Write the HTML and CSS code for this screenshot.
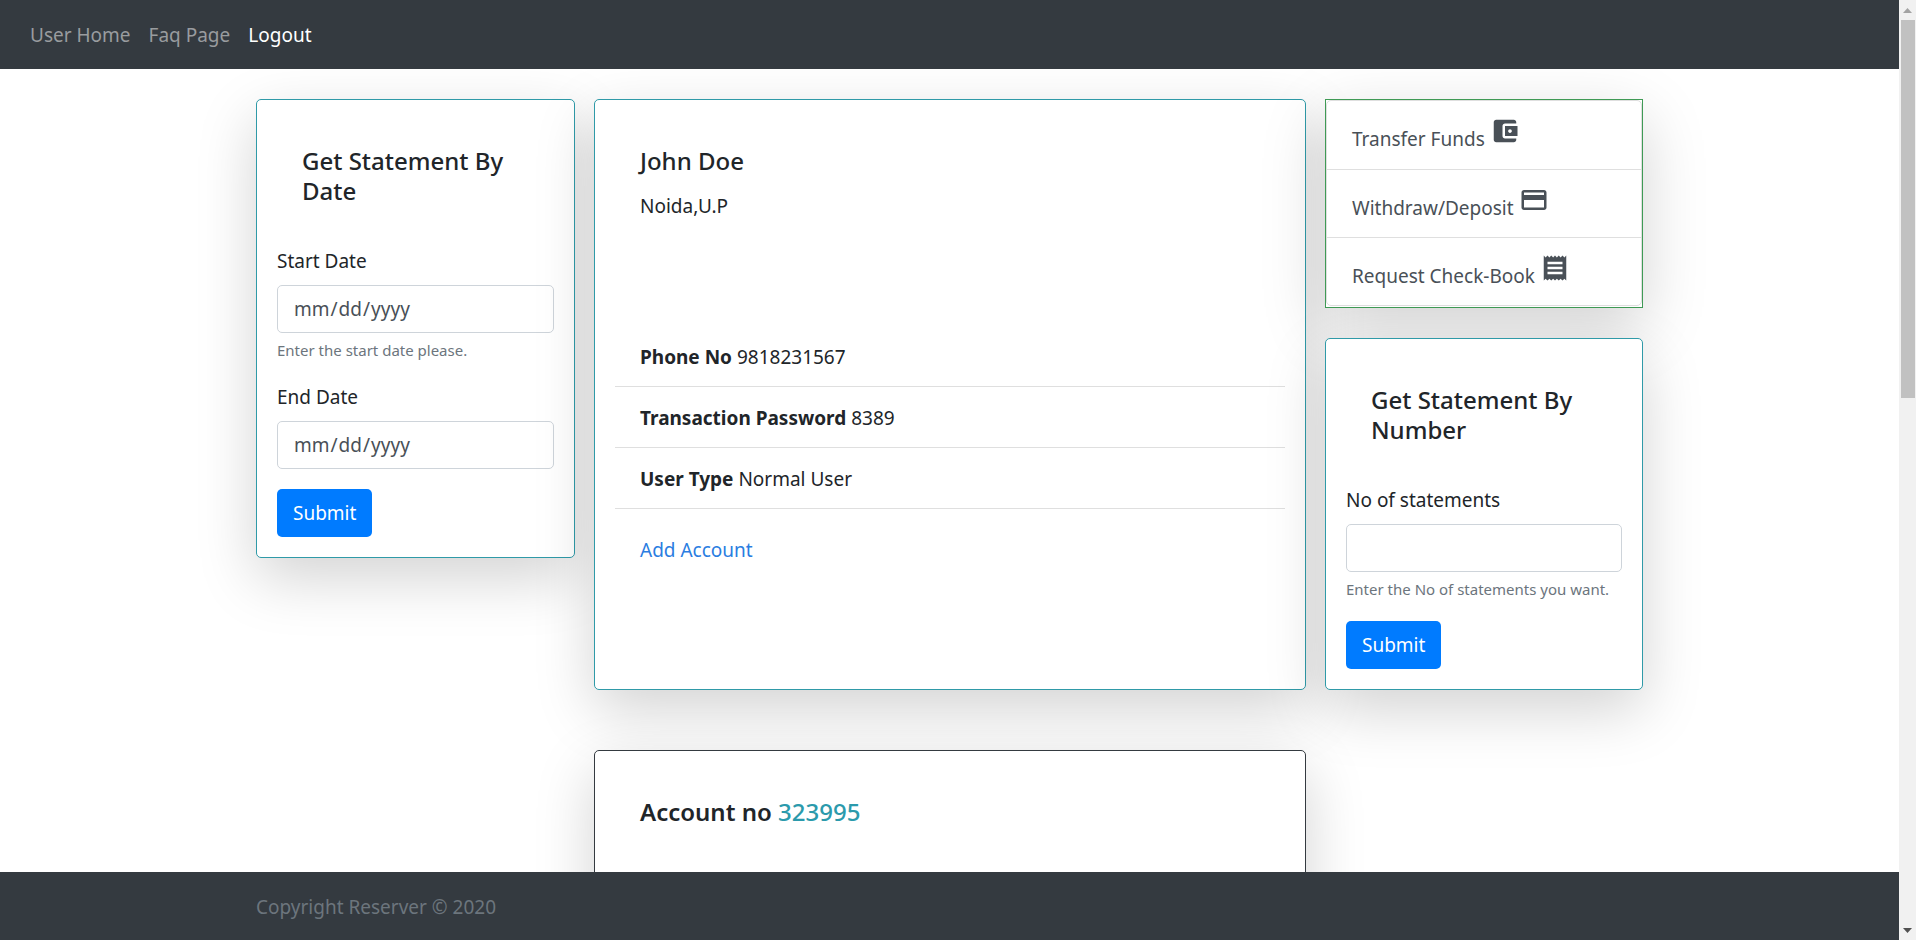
FILE: index.html
```html
<!DOCTYPE html>
<html lang="en">
<head>
<meta charset="utf-8">
<title>User Home</title>
<link rel="stylesheet" href="styles.css">
</head>
<body>
<div class="page">
  <nav class="navbar">
    <a class="nav-link" href="#">User Home</a>
    <a class="nav-link" href="#">Faq Page</a>
    <a class="nav-link active" href="#">Logout</a>
  </nav>

  <main class="content">
    <div class="container dashboard">
      <form class="card statement">
        <h2 class="card-title">Get Statement By Date</h2>
        <div class="form-group">
          <label for="start">Start Date</label>
          <input class="form-control" type="date" id="start">
          <small class="form-text">Enter the start date please.</small>
        </div>
        <div class="form-group">
          <label for="end">End Date</label>
          <input class="form-control" type="date" id="end">
        </div>
        <button class="btn" type="submit">Submit</button>
      </form>

      <section class="card profile">
        <div class="card-body">
          <h2 class="card-heading">John Doe</h2>
          <p class="card-text">Noida,U.P</p>
        </div>
        <ul class="details">
          <li><b>Phone No</b> 9818231567</li>
          <li><b>Transaction Password</b> 8389</li>
          <li><b>User Type</b> Normal User</li>
        </ul>
        <div class="card-body">
          <a class="card-link" href="#">Add Account</a>
        </div>
      </section>

      <div class="side">
        <div class="actions">
          <div class="action-list">
            <a class="action" href="#">Transfer Funds
              <svg class="icon" viewBox="0 0 24 24" aria-hidden="true"><path d="M21 18v1c0 1.100-.9 2-2 2H5c-1.110 0-2-.9-2-2V5c0-1.100.89-2 2-2h14c1.100 0 2 .9 2 2v1h-9c-1.110 0-2 .9-2 2v8c0 1.100.89 2 2 2h9zm-9-2h10V8H12v8zm4-2.500c-.83 0-1.500-.67-1.500-1.500s.67-1.500 1.500-1.500 1.500.67 1.500 1.500-.67 1.500-1.500 1.500z"/></svg></a>
            <a class="action" href="#">Withdraw/Deposit
              <svg class="icon" viewBox="0 0 24 24" aria-hidden="true"><path d="M20 4H4c-1.110 0-1.990.89-1.990 2L2 18c0 1.110.89 2 2 2h16c1.110 0 2-.89 2-2V6c0-1.110-.89-2-2-2zm0 14H4v-6h16v6zm0-10H4V6h16v2z"/></svg></a>
            <a class="action" href="#">Request Check-Book
              <svg class="icon" viewBox="0 0 24 24" aria-hidden="true"><path d="M18 17H6v-2h12v2zm0-4H6v-2h12v2zm0-4H6V7h12v2zM3 22l1.500-1.500L6 22l1.500-1.500L9 22l1.500-1.500L12 22l1.500-1.500L15 22l1.500-1.500L18 22l1.500-1.500L21 22V2l-1.500 1.500L18 2l-1.500 1.500L15 2l-1.500 1.500L12 2l-1.500 1.500L9 2 7.500 3.500 6 2 4.500 3.500 3 2v20z"/></svg></a>
          </div>
        </div>
        <form class="card statement">
          <h2 class="card-title">Get Statement By Number</h2>
          <div class="form-group">
            <label for="count">No of statements</label>
            <input class="form-control" type="text" id="count">
            <small class="form-text">Enter the No of statements you want.</small>
          </div>
          <button class="btn" type="submit">Submit</button>
        </form>
      </div>

      <section class="card account">
        <div class="card-body">
          <h2 class="card-heading account-no">Account no <span class="number">323995</span></h2>
        </div>
      </section>
    </div>
  </main>

  <footer class="footer">
    <div class="container">Copyright Reserver © 2020</div>
  </footer>
</div>

<div class="scrollbar" aria-hidden="true">
  <svg class="arrow" viewBox="0 0 17 20"><path fill="#a3a3a3" d="M4 13h9L8.500 8z"/></svg>
  <div class="track"><div class="thumb"></div></div>
  <svg class="arrow" viewBox="0 0 17 20"><path fill="#505050" d="M4 8h9l-4.500 5z"/></svg>
</div>
</body>
</html>
```

FILE: styles.css
```css
*, *::before, *::after {
  box-sizing: border-box;
}

body {
  margin: 0;
  height: 100vh;
  display: flex;
  font-family: "Noto Sans", "Open Sans", sans-serif;
  font-size: 19px;
  line-height: 30px;
  color: #212529;
  background: #fff;
}

.page {
  flex: 1;
  min-width: 0;
  display: flex;
  flex-direction: column;
}

.navbar {
  display: flex;
  padding: 20px 21px 19px;
  background: #343a40;
}

.nav-link {
  padding: 0 9px;
  color: #999c9f;
  text-decoration: none;
}

.nav-link.active {
  color: #fff;
}

.content {
  flex: 1;
  min-height: 0;
  overflow-y: auto;
  scrollbar-width: none;
  padding: 30px 0;
}

.container {
  width: 100%;
  max-width: 1387px;
  margin: 0 auto;
}

.dashboard {
  display: grid;
  grid-template-columns: 319fr 712fr 318fr;
  column-gap: 19px;
  row-gap: 60px;
}

.card {
  display: flex;
  flex-direction: column;
  padding: 20px;
  border: 1px solid #2f9aa8;
  border-radius: 5px;
  background: #fff;
  box-shadow: 0 20px 60px rgba(0, 0, 0, 0.175);
  position: relative;
}

.statement {
  align-items: flex-start;
  align-self: start;
}

.card-title,
.card-heading {
  margin: 0;
  font-size: 24px;
  font-weight: 500;
  line-height: 30px;
}

.card-title {
  padding: 26px 25px 40px;
}

.form-group {
  width: 100%;
  margin-bottom: 20px;
}

.form-group label {
  display: block;
  margin-bottom: 9px;
}

.form-control {
  display: block;
  width: 100%;
  height: 48px;
  padding: 0 15px;
  border: 1px solid #ced4da;
  border-radius: 5px;
  background: #fff;
  color: #495057;
  font: inherit;
}

.form-control::-webkit-calendar-picker-indicator {
  display: none;
}

.form-text {
  display: block;
  margin-top: 5px;
  font-size: 15px;
  line-height: 24px;
  color: #6c757d;
}

.btn {
  height: 48px;
  padding: 0 16px;
  border: 0;
  border-radius: 5px;
  background: #007bff;
  color: #fff;
  font: inherit;
}

.card-body {
  flex: 1 1 auto;
  padding: 26px 25px 24px;
}

.card-heading {
  margin-bottom: 15px;
}

.card-text {
  margin: 0;
}

.card-link {
  color: #2a7de1;
  text-decoration: none;
}

.details {
  margin: 0;
  padding: 0;
  list-style: none;
}

.details li {
  padding: 16px 25px 14px;
  border-bottom: 1px solid #dfdfdf;
}

.side {
  display: flex;
  flex-direction: column;
  gap: 30px;
}

.side .statement {
  align-self: stretch;
}

.actions {
  padding-bottom: 1px;
  border: 1px solid #3f9a55;
  background: #fff;
  box-shadow: 0 20px 60px rgba(0, 0, 0, 0.175);
  position: relative;
}

.action-list {
  border: 1px solid #dfdfdf;
  border-radius: 5px;
}

.action {
  display: block;
  height: 68px;
  padding: 15px 25px;
  line-height: 37px;
  color: #495057;
  text-decoration: none;
}

.action + .action {
  border-top: 1px solid #dfdfdf;
}

.icon {
  width: 30px;
  height: 30px;
  fill: currentColor;
  vertical-align: baseline;
}

.account {
  grid-column: 2;
  min-height: 400px;
  border-color: #343a40;
}

.account-no {
  font-weight: 600;
}

.number {
  font-weight: 500;
  color: #2b9aac;
}

.footer {
  position: relative;
  padding: 20px 0 18px;
  background: #343a40;
  color: #6c757d;
}

.scrollbar {
  width: 17px;
  display: flex;
  flex-direction: column;
  background: #f1f1f1;
}

.arrow {
  display: block;
  width: 17px;
  height: 20px;
}

.track {
  flex: 1;
  padding: 0 1px 0 2px;
}

.thumb {
  height: 42%;
  background: #c1c1c1;
}
```
